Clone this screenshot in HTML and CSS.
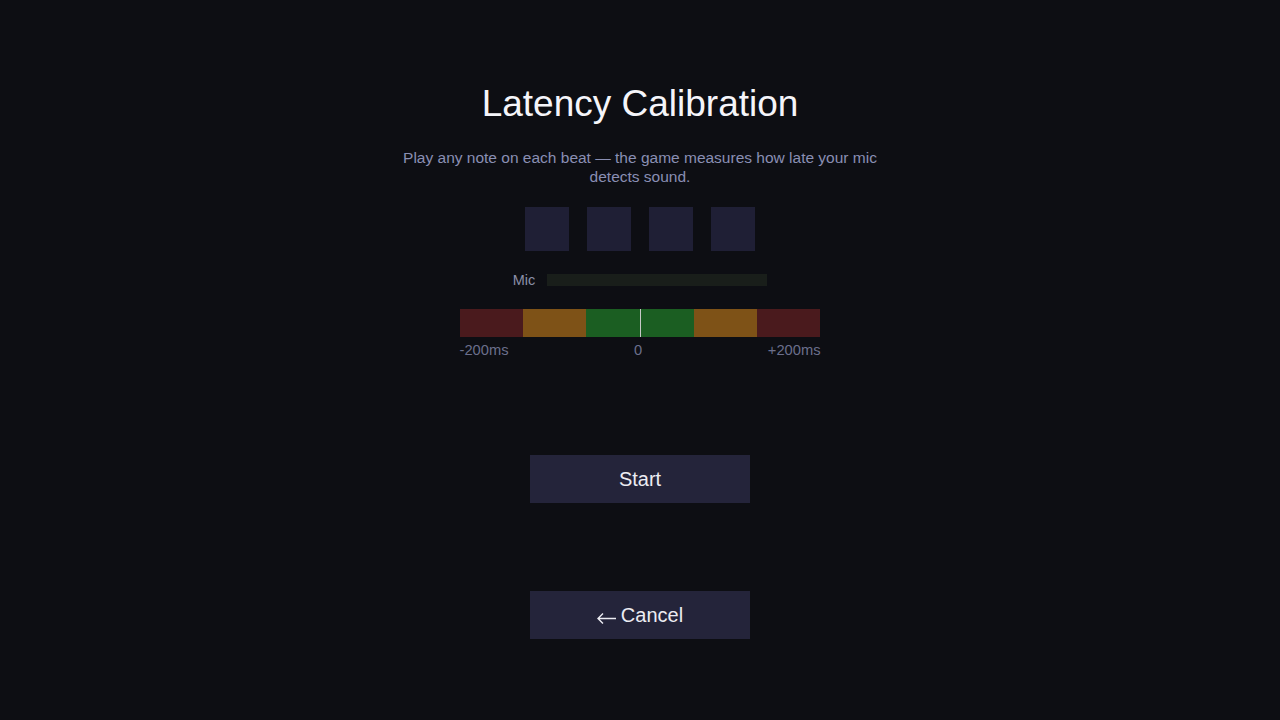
FILE: index.html
```html
<!DOCTYPE html>
<html>
<head>
<meta charset="utf-8">
<link rel="stylesheet" href="styles.css">
</head>
<body>
<main class="screen">
  <h1 class="title">Latency Calibration</h1>
  <p class="subtitle">Play any note on each beat — the game measures how late your mic detects sound.</p>
  <div class="beats">
    <div class="beat"></div>
    <div class="beat"></div>
    <div class="beat"></div>
    <div class="beat"></div>
  </div>
  <div class="mic-row">
    <span class="mic-label">Mic</span>
    <div class="mic-bar"></div>
  </div>
  <div class="meter">
    <div class="seg red"></div>
    <div class="seg orange"></div>
    <div class="seg green"></div>
    <div class="seg orange"></div>
    <div class="seg red"></div>
    <div class="center-line"></div>
  </div>
  <div class="meter-labels">
    <span>-200ms</span>
    <span>0</span>
    <span>+200ms</span>
  </div>
  <button class="btn start">Start</button>
  <button class="btn cancel"><svg class="arrow" width="19" height="12" viewBox="0 0 19 12" aria-hidden="true"><path d="M1 6.5 H19 M6 1.5 L1 6.5 L6 11.5" fill="none" stroke="#ececf2" stroke-width="1.4"/></svg>Cancel</button>
</main>
</body>
</html>
```
FILE: styles.css
```css
html, body {
  margin: 0;
  padding: 0;
  background: #0d0e13;
  height: 100%;
}
body {
  font-family: "Liberation Sans", Arial, sans-serif;
  color: #f2f2f7;
}
.screen {
  display: flex;
  flex-direction: column;
  align-items: center;
  padding-top: 82px;
}
.title {
  margin: 0;
  font-size: 37px;
  font-weight: 400;
  line-height: 44px;
  color: #f5f5fa;
}
.subtitle {
  margin: 22px 0 0;
  width: 480px;
  text-align: center;
  font-size: 15.5px;
  line-height: 19px;
  color: #8a8fb3;
}
.beats {
  display: flex;
  gap: 18px;
  margin-top: 21px;
}
.beat {
  width: 44px;
  height: 44px;
  background: #1f1f35;
}
.mic-row {
  display: flex;
  align-items: center;
  gap: 12px;
  margin-top: 21px;
  height: 16px;
}
.mic-label {
  font-size: 14.5px;
  color: #8a8fa8;
}
.mic-bar {
  width: 220px;
  height: 12px;
  background: #191e1a;
}
.meter {
  position: relative;
  display: flex;
  width: 360px;
  height: 28px;
  margin-top: 21px;
}
.seg {
  height: 100%;
}
.seg.red { width: 63px; background: #4a1a1d; }
.seg.orange { width: 63px; background: #7e5217; }
.seg.green { width: 108px; background: #1b5e22; }
.center-line {
  position: absolute;
  left: 180px;
  top: 0;
  width: 1px;
  height: 100%;
  background: #c8c8c8;
}
.meter-labels {
  display: flex;
  justify-content: space-between;
  width: 361px;
  margin-top: 5px;
  font-size: 14.7px;
  line-height: 16px;
  color: #6b6f8c;
}
.btn {
  width: 220px;
  height: 48px;
  border: none;
  background: #24243a;
  color: #ececf2;
  font-family: "Liberation Sans", Arial, sans-serif;
  font-size: 20px;
  padding: 0;
}
.arrow {
  vertical-align: -2px;
  margin-right: 5px;
}
.start {
  margin-top: 97px;
}
.cancel {
  margin-top: 88px;
}
```
